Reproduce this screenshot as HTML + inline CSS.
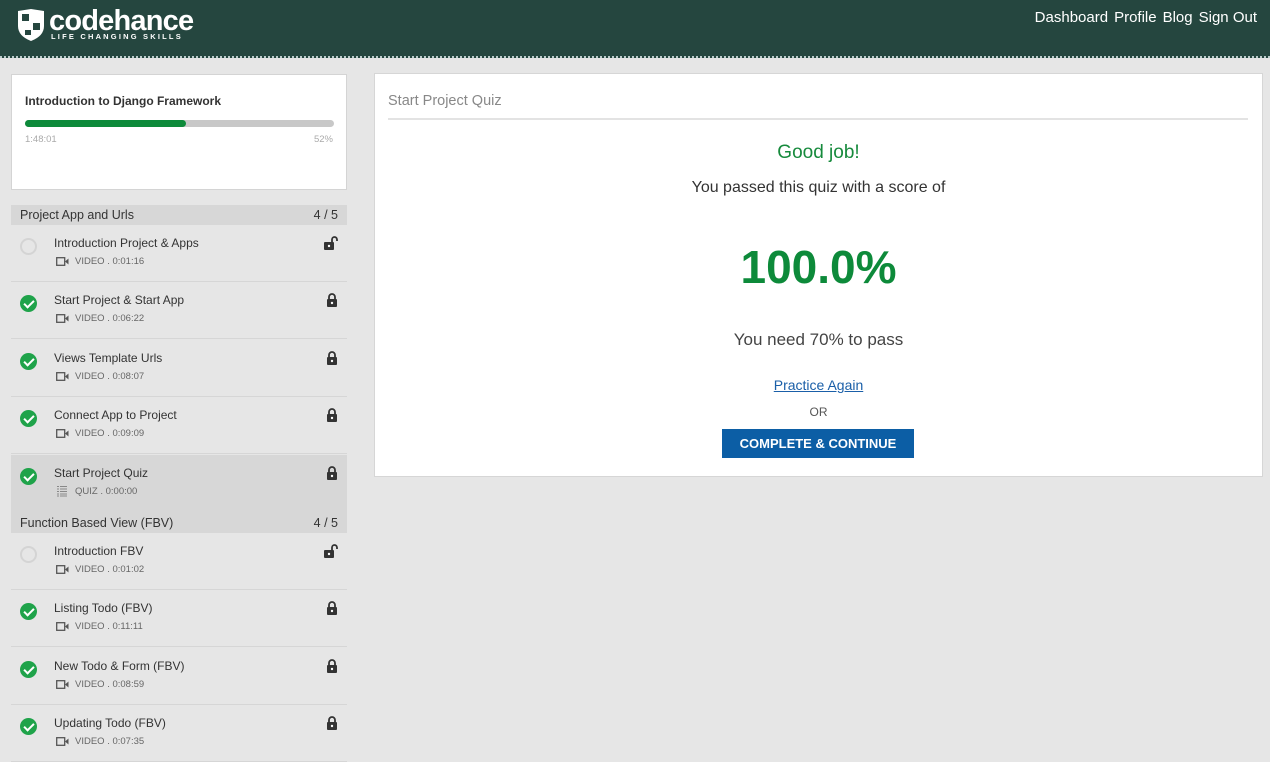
<!DOCTYPE html>
<html><head><meta charset="utf-8"><style>
*{margin:0;padding:0;box-sizing:border-box}
body{width:1270px;height:760px;overflow:hidden;background:#e6e6e6;font-family:"Liberation Sans",sans-serif;color:#333;position:relative}
.hdr{position:absolute;left:0;top:0;width:1270px;height:58px;background:#25463f;border-bottom:2px dotted #bcc}
.nav{position:absolute;right:13px;top:9px;color:#fff;font-size:15px;white-space:nowrap}
.nav span{margin-left:6px}
.logo{position:absolute;left:16px;top:5px;color:#fff}
.card{position:absolute;left:11px;top:74px;width:336px;height:116px;background:#fff;border:1px solid #d4d4d4}
.sec{position:absolute;left:11px;width:336px;height:20px;background:#d7d7d7;font-size:12.5px;padding:3px 9px;color:#333}
.sec span{float:right}
.item{position:absolute;left:11px;width:336px;height:57px;border-bottom:1px solid #d6d6d6}
.item .t{position:absolute;left:43px;top:11px;font-size:12px;color:#333}
.item .m{position:absolute;left:64px;top:31px;font-size:9.5px;color:#666}
.chk{position:absolute;left:9px;top:13px;width:17px;height:17px;border-radius:50%;background:#1fa34a}
.chk:after{content:"";position:absolute;left:6px;top:3px;width:4px;height:8px;border:solid #fff;border-width:0 2px 2px 0;transform:rotate(45deg)}
.circ{position:absolute;left:9px;top:13px;width:17px;height:17px;border-radius:50%;border:2px solid #d4d4d4}
.ic{position:absolute;left:45px;top:32px;line-height:0}
.ic svg{display:block}
.lk{position:absolute;right:9px;top:11px;line-height:0}
.lk svg{display:block}
.main{position:absolute;left:374px;top:73px;width:889px;height:404px;background:#fff;border:1px solid #d6d6d6}
</style></head><body>
<div class="hdr">
<div class="logo">
<svg width="30" height="34" viewBox="0 0 30 34" style="position:absolute;left:0;top:3px"><path d="M2 3 L15 1 L28 3 L28 18 Q28 28 15 33 Q2 28 2 18Z" fill="#fff"/><rect x="6" y="6" width="7" height="7" fill="#25463f"/><rect x="17" y="15" width="7" height="7" fill="#25463f"/><rect x="9" y="22" width="6" height="5" fill="#25463f"/></svg>
<div style="position:absolute;left:33px;top:1px;font-size:29px;font-weight:bold;letter-spacing:-0.8px;white-space:nowrap;line-height:30px">codehance</div>
<div style="position:absolute;left:35px;top:27px;font-size:7.5px;font-weight:bold;letter-spacing:2.2px;white-space:nowrap">LIFE CHANGING SKILLS</div>
</div>
<div class="nav"><span>Dashboard</span><span>Profile</span><span>Blog</span><span>Sign&nbsp;Out</span></div>
</div>

<div class="card">
<div style="position:absolute;left:13px;top:19px;font-size:12px;font-weight:bold;color:#333">Introduction to Django Framework</div>
<div style="position:absolute;left:13px;top:45px;width:309px;height:7px;border-radius:4px;background:#c8c8c8"><div style="width:161px;height:7px;border-radius:4px;background:#0d8a3a"></div></div>
<div style="position:absolute;left:13px;top:59px;font-size:9.5px;color:#aaa">1:48:01</div>
<div style="position:absolute;right:13px;top:59px;font-size:9.5px;color:#aaa">52%</div>
</div>

<div class="sec" style="top:205px">Project App and Urls<span>4 / 5</span></div>
<div class="item" style="top:455px;height:58px;background:#d7d7d7;border:none"></div>
<div class="sec" style="top:513px">Function Based View (FBV)<span>4 / 5</span></div>

<div id="items"></div>
<script>
var data=[[225,0,"Introduction Project & Apps","VIDEO . 0:01:16"],[282,1,"Start Project & Start App","VIDEO . 0:06:22"],[340,1,"Views Template Urls","VIDEO . 0:08:07"],[397,1,"Connect App to Project","VIDEO . 0:09:09"],[455,1,"Start Project Quiz","QUIZ . 0:00:00",1],[533,0,"Introduction FBV","VIDEO . 0:01:02"],[590,1,"Listing Todo (FBV)","VIDEO . 0:11:11"],[648,1,"New Todo & Form (FBV)","VIDEO . 0:08:59"],[705,1,"Updating Todo (FBV)","VIDEO . 0:07:35"]];
var cam='<svg width="13" height="9" viewBox="0 0 13 9"><rect x="0.7" y="0.7" width="8" height="7.6" fill="none" stroke="#555" stroke-width="1.3"/><path d="M9 4.5 L12.5 1.5 V7.5Z" fill="#555"/></svg>';
var quiz='<svg width="12" height="12" viewBox="0 0 12 12" stroke="#888" stroke-width="1"><path d="M1 1.5h2M4 1.5h7M1 4h2M4 4h7M1 6.5h2M4 6.5h7M1 9h2M4 9h7M1 11h2M4 11h7"/></svg>';
var lock='<svg width="12" height="14" viewBox="0 0 12 14"><path d="M3 6V4a3 3 0 0 1 6 0v2" fill="none" stroke="#333" stroke-width="1.8"/><rect x="1" y="6" width="10" height="8" rx="1" fill="#333"/><circle cx="6" cy="10" r="1.2" fill="#fff"/></svg>';
var unlock='<svg width="14" height="14" viewBox="0 0 14 14"><path d="M8 6V3.5a2.5 2.5 0 0 1 5 0V5" fill="none" stroke="#333" stroke-width="1.8"/><rect x="0" y="6" width="10" height="8" rx="1" fill="#333"/><circle cx="5" cy="10" r="1.2" fill="#fff"/></svg>';
var h='';
data.forEach(function(d){
h+='<div class="item" style="top:'+d[0]+'px;'+(d[4]?'border:none':'')+'">'+(d[1]?'<div class="chk"></div>':'<div class="circ"></div>')+'<div class="t">'+d[2].replace(/&/g,'&amp;')+'</div><div class="ic" style="'+(d[4]?'top:30px':'')+'">'+(d[4]?quiz:cam)+'</div><div class="m">'+d[3]+'</div><div class="lk">'+(d[1]?lock:unlock)+'</div></div>';
});
document.getElementById('items').innerHTML=h;
</script>

<div class="main">
<div style="position:absolute;left:13px;top:19px;font-size:14.5px;color:#888">Start Project Quiz</div>
<div style="position:absolute;left:13px;top:44px;width:860px;height:2px;background:#e3e3e3"></div>
<div style="position:absolute;left:0;width:887px;top:68px;text-align:center;font-size:19px;color:#168a3c">Good job!</div>
<div style="position:absolute;left:0;width:887px;top:105px;text-align:center;font-size:16px;color:#333">You passed this quiz with a score of</div>
<div style="position:absolute;left:0;width:887px;top:166px;text-align:center;font-size:46px;font-weight:bold;color:#0d8a3a">100.0%</div>
<div style="position:absolute;left:0;width:887px;top:256px;text-align:center;font-size:17px;color:#444">You need 70% to pass</div>
<div style="position:absolute;left:0;width:887px;top:303px;text-align:center;font-size:14px;color:#1a5fa8;text-decoration:underline">Practice Again</div>
<div style="position:absolute;left:0;width:887px;top:331px;text-align:center;font-size:12px;color:#555">OR</div>
<div style="position:absolute;left:347px;top:355px;width:192px;height:29px;background:#0c5ea5;color:#fff;font-size:13px;font-weight:bold;text-align:center;line-height:29px">COMPLETE &amp; CONTINUE</div>
</div>
</body></html>
